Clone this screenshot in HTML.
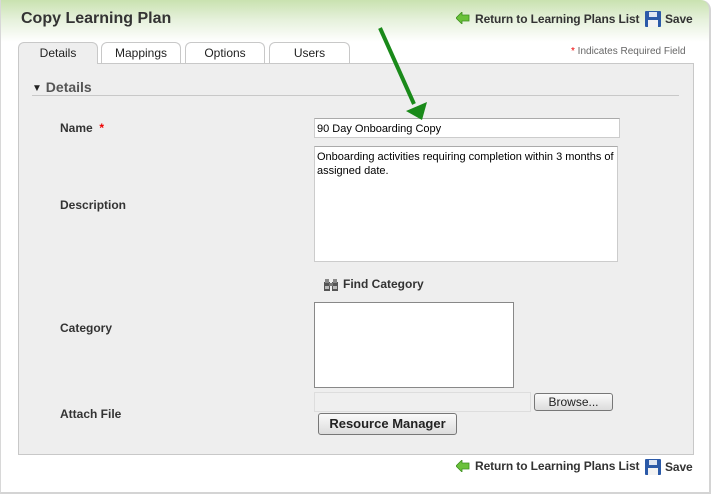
<!DOCTYPE html>
<html><head><style>
body{margin:0;width:712px;height:496px;background:#fff;font-family:"Liberation Sans",Arial,sans-serif;position:relative;overflow:hidden}
.frame{position:absolute;left:0;top:0;width:708px;height:492px;border:2px solid #d4d4d4;border-top:none;border-left:1px solid #d8d8d8;border-radius:0 10px 0 0;background:linear-gradient(#c9e2b0 0px,#e6f1dc 20px,#fff 42px,#fff 100%)}
.a{position:absolute;white-space:nowrap}
.title{left:21px;top:10px;font-size:16px;font-weight:bold;color:#333}
.link{font-size:12px;font-weight:bold;color:#333;letter-spacing:-0.1px}
.tab{position:absolute;top:42px;height:21px;border:1px solid #c8c8c8;border-bottom:none;border-radius:6px 6px 0 0;background:#fff;font-size:12px;color:#222;text-align:center;line-height:20px;box-sizing:border-box}
.panel{position:absolute;left:18px;top:63px;width:676px;height:392px;background:#eeeeee;border:1px solid #c8c8c8;box-sizing:border-box}
.lbl{font-size:12px;font-weight:bold;color:#333}
.inp{position:absolute;background:#fff;border:1px solid #ccc;border-top-color:#aaa;box-sizing:border-box;font-size:11px;color:#000;padding:3px 2px;line-height:14px}
.btn{position:absolute;border:1px solid #777;border-radius:3px;background:linear-gradient(#fafafa,#dcdcdc);box-sizing:border-box;text-align:center;color:#222}
</style></head><body>
<div class="frame"></div>
<div class="a title">Copy Learning Plan</div>
<svg class="a" style="left:456px;top:12px" width="14" height="12"><polygon points="0,6 6,0 6,3 13,3 13,9 6,9 6,12" fill="#6ac13a" stroke="#3d8f1e" stroke-width="0.8"/></svg>
<div class="a link" style="left:475px;top:12px">Return to Learning Plans List</div>
<svg class="a" style="left:645px;top:11px" width="16" height="16"><rect x="0" y="0" width="16" height="16" rx="1" fill="#2b5aa8"/><rect x="4" y="1" width="8" height="5" fill="#dfe6f2"/><rect x="3" y="9" width="10" height="7" fill="#f3f3f3"/></svg>
<div class="a link" style="left:665px;top:12px">Save</div>
<div class="a" style="left:571px;top:46px;font-size:10px;color:#666"><span style="color:#e00">*</span> Indicates Required Field</div>
<div class="panel"></div>
<div class="tab" style="left:18px;width:80px;background:#eeeeee;height:22px">Details</div>
<div class="tab" style="left:101px;width:80px">Mappings</div>
<div class="tab" style="left:185px;width:80px">Options</div>
<div class="tab" style="left:269px;width:81px">Users</div>
<div class="a" style="left:32px;top:79px;font-size:14px;font-weight:bold;color:#555"><span style="font-size:10px;color:#222;position:relative;top:-1px">▼</span> Details</div>
<div class="a" style="left:32px;top:95px;width:647px;height:1px;background:#c8c8c8"></div>
<div class="a lbl" style="left:60px;top:121px">Name <span style="color:#e00">&nbsp;*</span></div>
<div class="a lbl" style="left:60px;top:198px">Description</div>
<div class="a lbl" style="left:60px;top:321px">Category</div>
<div class="a lbl" style="left:60px;top:407px">Attach File</div>
<div class="inp" style="left:314px;top:118px;width:306px;height:20px;padding-top:3px">90 Day Onboarding Copy</div>
<div class="inp" style="left:314px;top:146px;width:304px;height:116px">Onboarding activities requiring completion within 3 months of assigned date.</div>
<svg class="a" style="left:324px;top:278px" width="14" height="13"><rect x="0" y="4" width="6" height="9" fill="#555"/><rect x="8" y="4" width="6" height="9" fill="#555"/><rect x="5" y="5" width="4" height="3" fill="#777"/><rect x="1" y="1" width="4" height="4" fill="#888"/><rect x="9" y="1" width="4" height="4" fill="#888"/><rect x="1" y="8" width="4" height="3" fill="#bbb"/><rect x="9" y="8" width="4" height="3" fill="#bbb"/></svg>
<div class="a lbl" style="left:343px;top:277px">Find Category</div>
<div class="inp" style="left:314px;top:302px;width:200px;height:86px;border:1px solid #888"></div>
<div class="inp" style="left:314px;top:392px;width:217px;height:20px;background:#efefef;border-color:#ddd"></div>
<div class="btn" style="left:534px;top:393px;width:79px;height:18px;font-size:12px;line-height:16px">Browse...</div>
<div class="btn" style="left:318px;top:413px;width:139px;height:22px;font-size:13px;font-weight:bold;line-height:20px">Resource Manager</div>
<svg class="a" style="left:456px;top:460px" width="14" height="12"><polygon points="0,6 6,0 6,3 13,3 13,9 6,9 6,12" fill="#6ac13a" stroke="#3d8f1e" stroke-width="0.8"/></svg>
<div class="a link" style="left:475px;top:459px">Return to Learning Plans List</div>
<svg class="a" style="left:645px;top:459px" width="16" height="16"><rect x="0" y="0" width="16" height="16" rx="1" fill="#2b5aa8"/><rect x="4" y="1" width="8" height="5" fill="#dfe6f2"/><rect x="3" y="9" width="10" height="7" fill="#f3f3f3"/></svg>
<div class="a link" style="left:665px;top:460px">Save</div>
<svg class="a" style="left:0;top:0" width="712" height="496"><line x1="380" y1="28" x2="414" y2="104" stroke="#1a8a1a" stroke-width="4"/><polygon points="406,111 427,102 422,120" fill="#1a8a1a"/></svg>
</body></html>
